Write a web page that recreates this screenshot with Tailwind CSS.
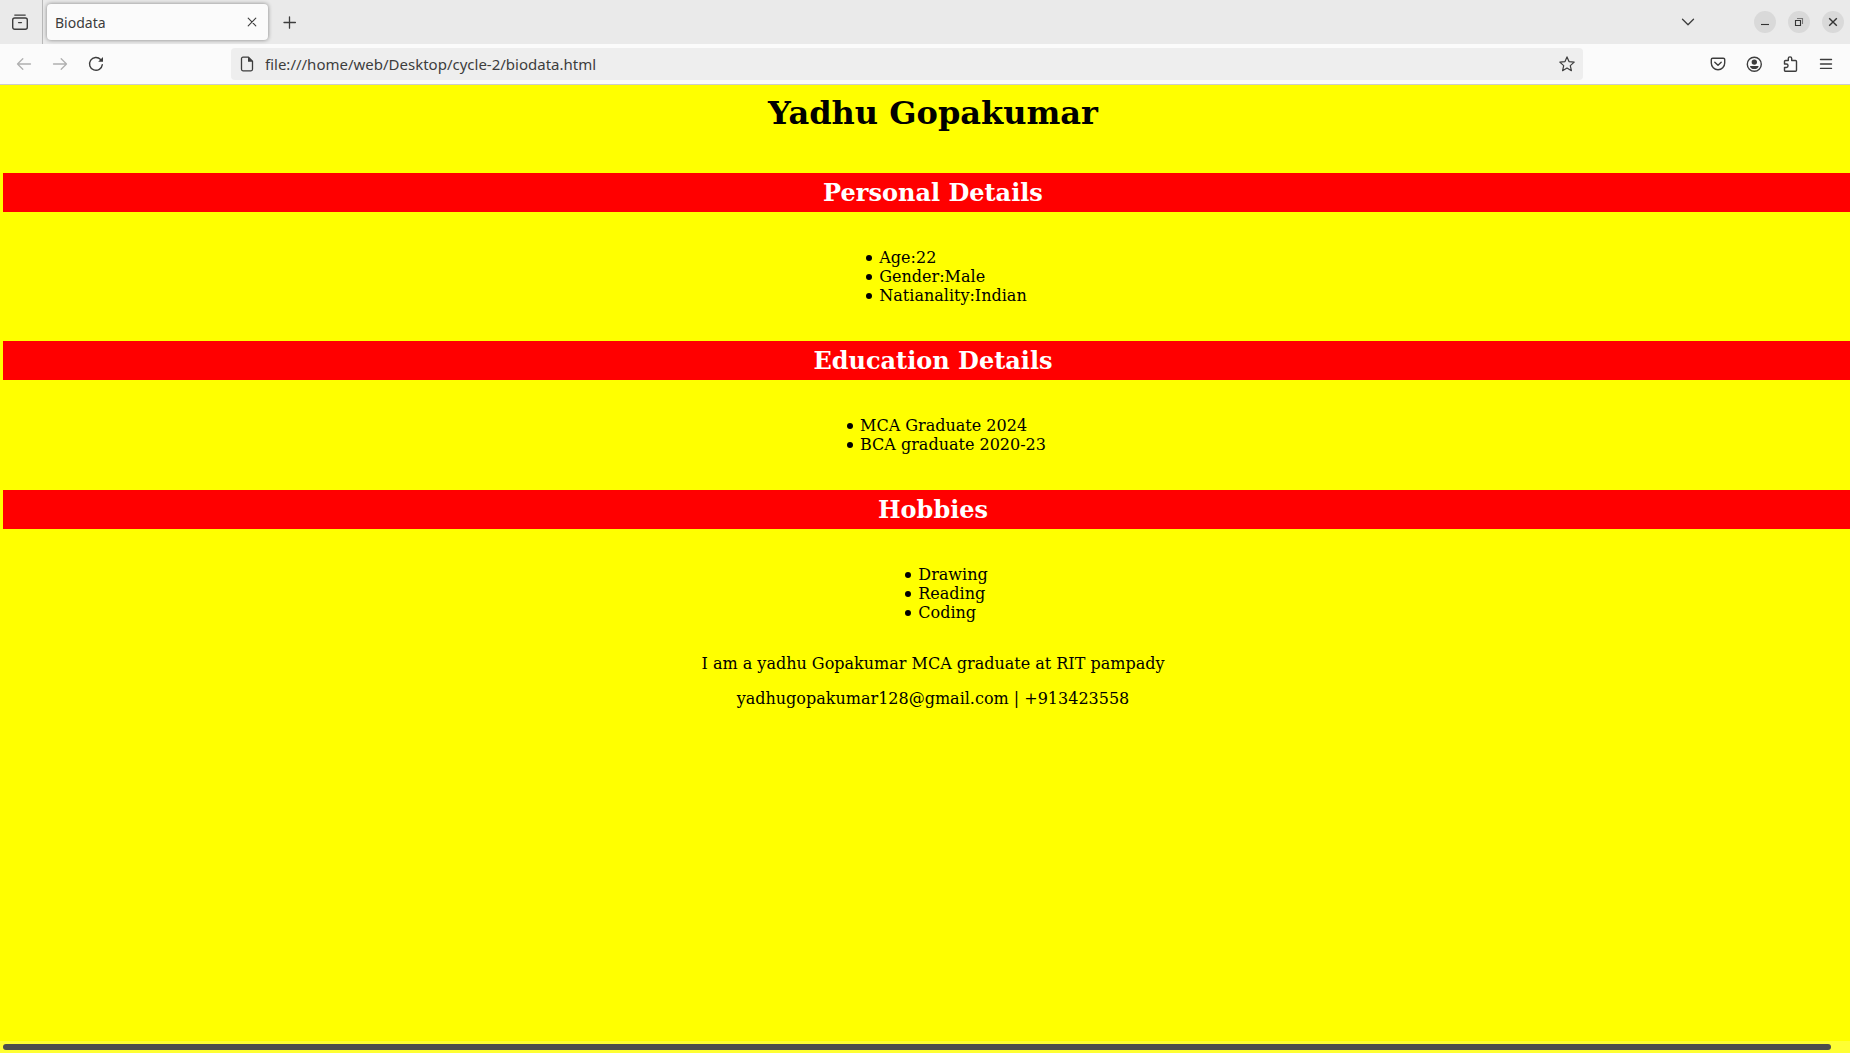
<!DOCTYPE html>
<html lang="en">
<head>
<meta charset="utf-8">
<title>Biodata</title>
<script src="https://cdn.jsdelivr.net/npm/@tailwindcss/browser@4"></script>
</head>
<body class="flex h-screen flex-col overflow-hidden bg-[#ffff00]">
<header class="shrink-0 font-['Noto_Sans',sans-serif] text-[14px] text-[#3d3d3d]">
  <div class="flex h-11 items-center bg-[#eaeaea]">
    <div class="flex h-11 w-[43px] items-center border-r border-[#b8b8b8] pl-3">
      <button aria-label="Recent browsing" class="size-4">
        <svg viewBox="0 0 16 16" class="size-4" fill="none" stroke="#3d3d3d" stroke-width="1.4" stroke-linecap="round"><path d="M2.8 1.1h10.4"/><rect x=".7" y="4" width="14.6" height="11.3" rx="2"/><path d="M6.6 8.6h2.8"/></svg>
      </button>
    </div>
    <div class="ml-1 flex h-9 w-[221px] items-center justify-between rounded bg-[#fbfbfb] pr-2 pl-2 shadow-[0_0_4px_rgba(0,0,0,0.45)]">
      <span>Biodata</span>
      <button aria-label="Close tab" class="size-4">
        <svg viewBox="0 0 16 16" class="size-4" fill="none" stroke="#3d3d3d" stroke-width="1.1" stroke-linecap="round"><path d="M4.2 4.2l7.6 7.6M11.8 4.2l-7.6 7.6"/></svg>
      </button>
    </div>
    <button aria-label="New tab" class="ml-3.5 size-4">
      <svg viewBox="0 0 16 16" class="size-4" fill="none" stroke="#3d3d3d" stroke-width="1.3" stroke-linecap="round"><path d="M2 8.5h11.4M7.500 2.8v11.4"/></svg>
    </button>
    <button aria-label="List all tabs" class="mr-[58px] ml-auto size-4">
      <svg viewBox="0 0 16 16" class="size-4" fill="none" stroke="#3d3d3d" stroke-width="1.3" stroke-linecap="round" stroke-linejoin="round"><path d="M2.5 5.2L8 10.8l5.5-5.6"/></svg>
    </button>
    <div class="flex gap-3 pr-1.5">
      <button aria-label="Minimize" class="flex size-[22px] items-center justify-center rounded-full bg-[#d9d9d9]">
        <svg viewBox="0 0 16 16" class="size-4" fill="none" stroke="#333" stroke-width="1.1"><path d="M4 10.5h8"/></svg>
      </button>
      <button aria-label="Restore" class="flex size-[22px] items-center justify-center rounded-full bg-[#d9d9d9]">
        <svg viewBox="0 0 16 16" class="size-4" fill="none" stroke="#333" stroke-width="1.1"><path d="M4.5 6.5h5v5h-5z"/><path d="M6 4.500h5.500V10" stroke="#777"/></svg>
      </button>
      <button aria-label="Close" class="flex size-[22px] items-center justify-center rounded-full bg-[#d9d9d9]">
        <svg viewBox="0 0 16 16" class="size-4" fill="none" stroke="#333" stroke-width="1.4"><path d="M4.200 4.200l7.600 7.600M11.800 4.200l-7.600 7.600"/></svg>
      </button>
    </div>
  </div>
  <div class="flex h-[41px] items-center border-b border-[#cccccc] bg-[#fbfbfb] px-4">
    <div class="flex gap-5">
      <button aria-label="Back" disabled class="size-4">
        <svg viewBox="0 0 16 16" class="size-4" fill="none" stroke="#b0b0b0" stroke-width="1.3" stroke-linecap="round" stroke-linejoin="round"><path d="M14.500 8H1.500M6.800 2.700L1.500 8l5.300 5.300"/></svg>
      </button>
      <button aria-label="Forward" disabled class="size-4">
        <svg viewBox="0 0 16 16" class="size-4" fill="none" stroke="#b0b0b0" stroke-width="1.3" stroke-linecap="round" stroke-linejoin="round"><path d="M1.500 8h13M9.200 2.700L14.500 8l-5.300 5.300"/></svg>
      </button>
      <button aria-label="Reload" class="size-4">
        <svg viewBox="0 0 16 16" class="size-4" fill="none" stroke="#3d3d3d" stroke-width="1.4" stroke-linecap="round"><path d="M14.300 8.600A6.400 6.400 0 1 1 12.600 3.500"/><path d="M15 1v4.800h-4.800z" fill="#3d3d3d" stroke="none"/></svg>
      </button>
    </div>
    <div class="mx-[127px] flex h-8 flex-1 items-center rounded bg-[#eeeeee] px-2">
      <svg viewBox="0 0 16 16" class="size-4" fill="none" stroke="#3d3d3d" stroke-width="1.300" stroke-linejoin="round"><path d="M9.500 1.200H4A1.500 1.500 0 0 0 2.500 2.700v10.600A1.500 1.500 0 0 0 4 14.800h8a1.500 1.500 0 0 0 1.500-1.500V5.200z"/><path d="M9 1.200l4.500 4.600H9z" fill="#3d3d3d" stroke="none"/></svg>
      <input aria-label="Address" value="file:///home/web/Desktop/cycle-2/biodata.html" class="mx-2.5 min-w-0 flex-1 bg-transparent text-[15px] outline-none">
      <button aria-label="Bookmark this page" class="size-4">
        <svg viewBox="0 0 16 16" class="size-4" fill="none" stroke="#3d3d3d" stroke-width="1.200" stroke-linejoin="round"><path d="M8 .9l2 4.700 5.200.5-3.900 3.500 1.100 5.100L8 12.100l-4.400 2.600 1.100-5.100L.8 6.100 6 5.600z"/></svg>
      </button>
    </div>
    <div class="flex gap-5">
      <button aria-label="Save to Pocket" class="size-4">
        <svg viewBox="0 0 16 16" class="size-4" fill="none" stroke="#3d3d3d" stroke-width="1.400" stroke-linecap="round" stroke-linejoin="round"><path d="M2.700 2.200h10.600a1.400 1.400 0 0 1 1.400 1.400v3.500a6.700 6.700 0 0 1-13.400 0V3.600a1.400 1.400 0 0 1 1.400-1.400z"/><path d="M4.800 6.300L8 9.300l3.200-3"/></svg>
      </button>
      <button aria-label="Account" class="size-4">
        <svg viewBox="0 0 16 16" class="size-4"><circle cx="8.300" cy="8.300" r="7" fill="none" stroke="#3d3d3d" stroke-width="1.400"/><circle cx="8.300" cy="6.100" r="2.700" fill="#3d3d3d"/><path d="M4 9.900h8.600c0 2-1.900 3.200-4.300 3.200S4 11.900 4 9.900z" fill="#3d3d3d"/></svg>
      </button>
      <button aria-label="Extensions" class="size-4">
        <svg viewBox="0 0 16 16" class="size-4" fill="none" stroke="#3d3d3d" stroke-width="1.400" stroke-linejoin="round"><path d="M2.500 8V5.500a1 1 0 0 1 1-1h2.800V2.600a1.700 1.700 0 0 1 3.400 0v1.900h3.800a1 1 0 0 1 1 1v8.700a1 1 0 0 1-1 1h-10a1 1 0 0 1-1-1v-2.700h1.800a1.700 1.700 0 0 0 0-3.500z"/></svg>
      </button>
      <button aria-label="Menu" class="size-4">
        <svg viewBox="0 0 16 16" class="size-4" fill="none" stroke="#3d3d3d" stroke-width="1.400" stroke-linecap="round"><path d="M2.500 3.500h11M2.500 8h11M2.500 12.400h11"/></svg>
      </button>
    </div>
  </div>
</header>
<main class="min-h-0 flex-1 overflow-hidden font-['DejaVu_Serif',serif] text-[16px] leading-[19px] text-black">
  <div class="-mr-[13px] ml-[3px] flex flex-col items-center pt-[9px]">
    <h1 class="text-[32px] leading-[38px] font-bold">Yadhu Gopakumar</h1>
    <h2 class="mt-[41px] w-full bg-[#ff0000] py-[5px] text-center text-[24px] leading-[29px] font-bold text-white">Personal Details</h2>
    <ul class="my-9 pl-10 *:before:mr-[7px] *:before:-ml-[13px] *:before:inline-block *:before:size-1.5 *:before:rounded-full *:before:bg-black *:before:align-[2px]">
      <li>Age:22</li>
      <li>Gender:Male</li>
      <li>Natianality:Indian</li>
    </ul>
    <h2 class="w-full bg-[#ff0000] py-[5px] text-center text-[24px] leading-[29px] font-bold text-white">Education Details</h2>
    <ul class="my-9 pl-10 *:before:mr-[7px] *:before:-ml-[13px] *:before:inline-block *:before:size-1.5 *:before:rounded-full *:before:bg-black *:before:align-[2px]">
      <li>MCA Graduate 2024</li>
      <li>BCA graduate 2020-23</li>
    </ul>
    <h2 class="w-full bg-[#ff0000] py-[5px] text-center text-[24px] leading-[29px] font-bold text-white">Hobbies</h2>
    <ul class="mt-9 mb-8 pl-10 *:before:mr-[7px] *:before:-ml-[13px] *:before:inline-block *:before:size-1.5 *:before:rounded-full *:before:bg-black *:before:align-[2px]">
      <li>Drawing</li>
      <li>Reading</li>
      <li>Coding</li>
    </ul>
    <p>I am a yadhu Gopakumar MCA graduate at RIT pampady</p>
    <p class="mt-4">yadhugopakumar128@gmail.com | +913423558</p>
  </div>
</main>
<div class="h-3 shrink-0 bg-[#ffff33] py-[3px] pr-[19px] pl-[3px]">
  <div class="h-1.5 rounded-full bg-[#4d4d4d]"></div>
</div>
</body>
</html>
